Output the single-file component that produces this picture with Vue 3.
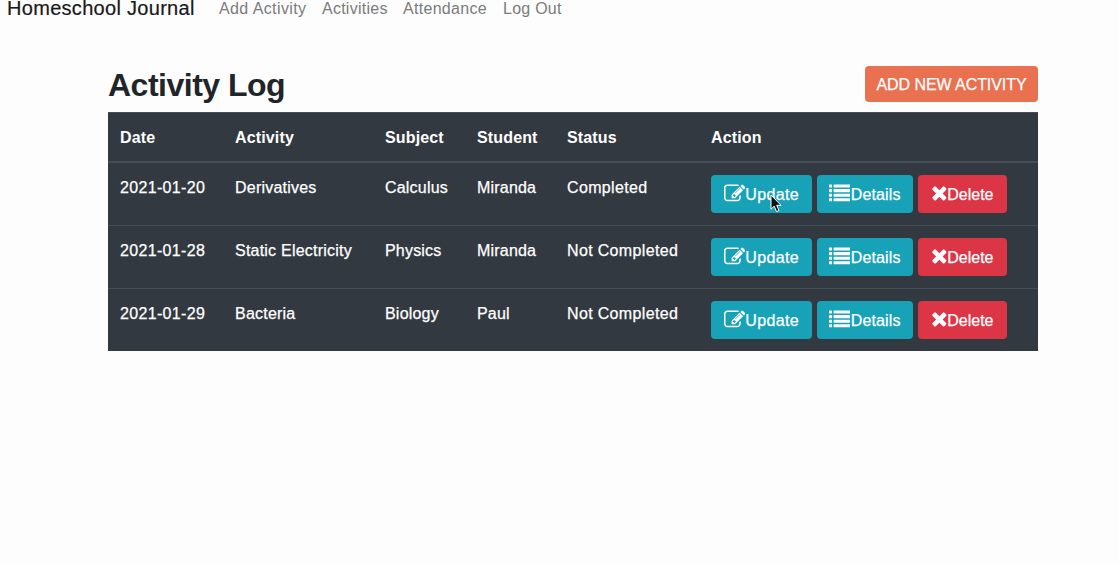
<script setup>
const links = [
  { label: 'Add Activity', cls: 'l-add' },
  { label: 'Activities', cls: 'l-list' },
  { label: 'Attendance', cls: 'l-att' },
  { label: 'Log Out', cls: 'l-out' },
]
const heads = ['Date', 'Activity', 'Subject', 'Student', 'Status', 'Action']
const rows = [
  { date: '2021-01-20', activity: 'Derivatives', subject: 'Calculus', student: 'Miranda', status: 'Completed' },
  { date: '2021-01-28', activity: 'Static Electricity', subject: 'Physics', student: 'Miranda', status: 'Not Completed' },
  { date: '2021-01-29', activity: 'Bacteria', subject: 'Biology', student: 'Paul', status: 'Not Completed' },
]
const bars = [128, 512, 896, 1280]
</script>

<template>
  <div class="page">
    <nav class="navbar">
      <a class="brand">Homeschool Journal</a>
      <a v-for="l in links" :key="l.label" class="link" :class="l.cls">{{ l.label }}</a>
    </nav>
    <main class="container">
      <header class="top">
        <h2>Activity Log</h2>
        <button class="add"><span>ADD NEW ACTIVITY</span></button>
      </header>
      <table>
        <colgroup>
          <col class="c1"><col class="c2"><col class="c3"><col class="c4"><col class="c5"><col class="c6">
        </colgroup>
        <thead>
          <tr><th v-for="h in heads" :key="h">{{ h }}</th></tr>
        </thead>
        <tbody>
          <tr v-for="r in rows" :key="r.date">
            <td class="date">{{ r.date }}</td>
            <td class="activity">{{ r.activity }}</td>
            <td class="subject">{{ r.subject }}</td>
            <td class="student">{{ r.student }}</td>
            <td class="status">{{ r.status }}</td>
            <td class="action">
              <div class="actions">
                <button class="btn update">
                  <svg class="wide" viewBox="0 0 1792 1792"><path d="M888 1184l116-116-152-152-116 116v56h96v96h56zm440-720q-16-16-33 1l-350 350q-17 17-1 33t33-1l350-350q17-17 1-33zm80 594v190q0 119-84.5 203.5t-203.5 84.5h-832q-119 0-203.5-84.5t-84.5-203.5v-832q0-119 84.5-203.5t203.5-84.5h832q63 0 117 25 15 7 18 23 3 17-9 29l-49 49q-14 14-32 8-23-6-45-6h-832q-66 0-113 47t-47 113v832q0 66 47 113t113 47h832q66 0 113-47t47-113v-126q0-13 9-22l64-64q15-15 35-7t20 29zm-96-738l288 288-672 672h-288v-288zm444 132l-92 92-288-288 92-92q28-28 68-28t68 28l152 152q28 28 28 68t-28 68z" /></svg>
                  <span>Update</span>
                </button>
                <button class="btn details">
                  <svg class="wide" viewBox="0 0 1792 1792">
                    <template v-for="y in bars" :key="y">
                      <rect x="0" :y="y" width="256" height="256" rx="32" />
                      <rect x="384" :y="y" width="1408" height="256" rx="32" />
                    </template>
                  </svg>
                  <span>Details</span>
                </button>
                <button class="btn delete">
                  <svg class="narrow" viewBox="192 0 1408 1792"><path d="M1490 1322q0 40-28 68l-136 136q-28 28-68 28t-68-28l-294-294-294 294q-28 28-68 28t-68-28l-136-136q-28-28-28-68t28-68l294-294-294-294q-28-28-28-68t28-68l136-136q28-28 68-28t68 28l294 294 294-294q28-28 68-28t68 28l136 136q28 28 28 68t-28 68l-294 294 294 294q28 28 28 68z" /></svg>
                  <span>Delete</span>
                </button>
              </div>
            </td>
          </tr>
        </tbody>
      </table>
    </main>
    <svg class="cursor" viewBox="0 0 12 19"><path d="M1 1V15.2L4.2 12.2L6.5 17.6L9 16.5L6.7 11.3H11Z" fill="#111" stroke="#fff" stroke-width="1" /></svg>
  </div>
</template>

<style>
body { background: #fdfdfd; }
</style>

<style scoped>
.page {
  position: relative;
  height: 565px;
  overflow: hidden;
  font: 16px/24px "Liberation Sans", Arial, sans-serif;
  color: #212529;
}
.navbar { display: flex; height: 66px; padding-left: 7px; box-sizing: border-box; white-space: nowrap; }
.brand { width: 212px; font-size: 20px; line-height: 30px; margin-top: -7px; color: #191919; letter-spacing: 0.3px; -webkit-text-stroke: 0.2px #191919; }
.link { margin-top: -3px; color: #7b7b7b; letter-spacing: 0.25px; }
.l-add { width: 103px; letter-spacing: 0.4px; }
.l-list { width: 81px; }
.l-att { width: 100px; letter-spacing: 0.3px; }
.container { width: 930px; margin-left: 108px; }
.top { display: flex; justify-content: space-between; height: 46px; }
h2 { margin: 0; font-size: 32px; line-height: 39px; font-weight: 700; letter-spacing: -0.5px; }
button { font: inherit; border: 0; color: #fff; white-space: nowrap; -webkit-text-stroke: 0.25px #fff; }
.add { width: 173px; height: 36px; padding: 2px 0 0; border-radius: 4px; background: #e97150; letter-spacing: -0.07px; }
table { width: 930px; table-layout: fixed; border-spacing: 0; background: #333940; color: #fff; }
.c1 { width: 115px; }
.c2 { width: 150px; }
.c3 { width: 92px; }
.c4 { width: 90px; }
.c5 { width: 144px; }
.c6 { width: 339px; }
th, td { padding: 13px 12px 11px; text-align: left; vertical-align: top; white-space: nowrap; }
th { border-top: 1px solid #454d55; border-bottom: 2px solid #454d55; letter-spacing: 0.15px; }
td { -webkit-text-stroke: 0.25px #fff; }
tr + tr td { border-top: 1px solid #454d55; }
.date { letter-spacing: 0.33px; }
.activity { letter-spacing: 0.22px; }
.subject, .student { letter-spacing: 0.2px; }
.status { letter-spacing: 0.34px; }
td.action { padding: 12px; }
.actions { display: flex; gap: 5px; }
.btn { display: flex; align-items: center; height: 38px; padding: 0 0 0 13px; border-radius: 4px; background: #17a2b8; }
.btn span { padding-top: 2px; }
.update { width: 101px; letter-spacing: 0.35px; }
.details { width: 96px; padding-left: 12px; letter-spacing: 0.12px; }
.delete { width: 89px; background: #dc3545; }
.btn svg { flex: none; fill: #fff; height: 21.33px; margin-top: -1px; }
.btn .wide { width: 21.33px; }
.details .wide { margin-right: 0.5px; }
.btn .narrow { width: 16.76px; margin: -2px 0 0 -0.5px; }
.cursor { position: absolute; left: 770px; top: 194px; width: 12px; height: 19px; }
</style>
